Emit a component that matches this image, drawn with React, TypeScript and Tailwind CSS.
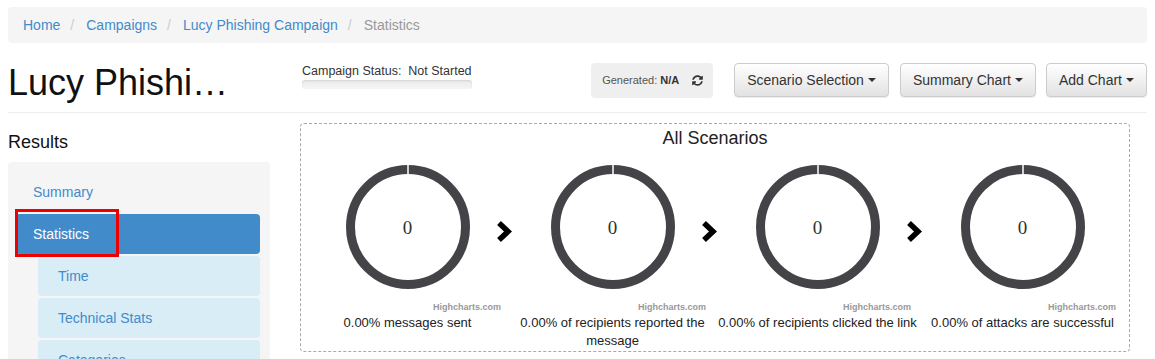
import React from "react";
import { FaSyncAlt } from "react-icons/fa";

function Caret() {
  return (
    <span className="ml-[4px] inline-block h-0 w-0 border-x-[4px] border-t-[4px] border-x-transparent border-t-[#333] align-middle" />
  );
}

function Btn({ label, className = "" }: { label: string; className?: string }) {
  return (
    <button
      className={
        "flex h-[34px] items-center rounded-[4px] border border-[#ccc] bg-linear-to-b from-white to-[#e2e2e2] px-[12px] text-[14px] text-[#333] shadow-[0_1px_1px_rgba(0,0,0,0.075)] " +
        className
      }
    >
      {label}
      <Caret />
    </button>
  );
}

function Donut() {
  return (
    <div className="relative h-[124px] w-[124px]">
      <svg width="124" height="124" viewBox="0 0 124 124">
        <circle cx="62" cy="62" r="57.5" fill="none" stroke="#434348" strokeWidth="9" />
        <line x1="62" y1="0" x2="62" y2="11" stroke="#fff" strokeWidth="1.5" />
      </svg>
      <div className="absolute inset-0 flex items-center justify-center pt-[3px] font-['Liberation_Serif',serif] text-[19px] text-[#333]">
        0
      </div>
    </div>
  );
}

function Arrow() {
  return (
    <svg
      className="absolute left-[191px] top-[70px]"
      width="18"
      height="26"
      viewBox="0 0 18 26"
    >
      <polyline points="3,4 12,12.5 3,21" fill="none" stroke="#000" strokeWidth="5.5" strokeLinejoin="miter" />
    </svg>
  );
}

function ChartCol({ label, arrow }: { label: string; arrow?: boolean }) {
  return (
    <div className="flex w-[205px] flex-col items-center">
      <div className="relative flex h-[165px] w-full justify-center pt-[16px]">
        <Donut />
        {arrow && <Arrow />}
        <div className="absolute bottom-[1px] right-[9px] text-[9px] font-bold leading-[12px] text-[#999]">
          Highcharts.com
        </div>
      </div>
      <div className="w-full text-center text-[13px] leading-[18px] text-[#222]">{label}</div>
    </div>
  );
}

export default function App() {
  const crumbs = ["Home", "Campaigns", "Lucy Phishing Campaign"];
  return (
    <div className="min-h-[359px] bg-white px-[8px] pt-[7px] font-['Liberation_Sans',Arial,sans-serif] text-[#333]">
      {/* breadcrumb */}
      <div className="flex h-[36px] items-center rounded-[4px] bg-[#f5f5f5] px-[15px] text-[14px]">
        {crumbs.map((c) => (
          <React.Fragment key={c}>
            <span className="text-[#428bca]">{c}</span>
            <span className="ml-[10px] mr-[12px] text-[#ccc]">/</span>
          </React.Fragment>
        ))}
        <span className="text-[#999]">Statistics</span>
      </div>

      {/* header row */}
      <div className="mt-[20px] flex items-start border-b border-[#eee] pb-[9px]">
        <div className="w-[294px] shrink-0">
          <h1 className="text-[36px] leading-[40px] text-[#111]">Lucy Phishi…</h1>
        </div>
        <div className="w-[172px] shrink-0">
          <div className="whitespace-nowrap text-[12.5px] leading-[16px] text-[#333]">Campaign Status:{"\u00a0 "}Not Started</div>
          <div className="mt-[1px] h-[9px] w-[170px] rounded-[3px] bg-linear-to-b from-[#ebebeb] to-[#f5f5f5] shadow-[inset_0_1px_2px_rgba(0,0,0,0.1)]" />
        </div>
        <div className="ml-auto flex items-start">
          <div className="flex h-[35px] w-[122px] items-center rounded-[4px] bg-[#efefef] pl-[11px] text-[11px] text-[#555]">
            Generated:&nbsp;<span className="font-bold text-[#333]">N/A</span>
            <FaSyncAlt className="ml-[13px] text-[#333]" size={11} />
          </div>
          <div className="ml-[21px] flex">
            <Btn label="Scenario Selection" />
            <Btn label="Summary Chart" className="ml-[11px]" />
            <Btn label="Add Chart" className="ml-[10px]" />
          </div>
        </div>
      </div>

      {/* main */}
      <div className="flex items-start gap-[30px]">
        <div className="w-[262px] shrink-0 pt-[19px]">
          <div className="text-[18px] leading-[20px] text-[#111]">Results</div>
          <div className="mt-[10px] rounded-[4px] bg-[#f5f5f5] pb-[10px] pl-[8px] pr-[10px] pt-[10px] text-[14px]">
            <div className="flex h-[40px] items-center rounded-[4px] pl-[17px] text-[#428bca]">Summary</div>
            <div className="relative mt-[2px] flex h-[40px] items-center rounded-[4px] bg-[#428bca] pl-[17px] text-white">
              Statistics
              <div className="absolute left-[-1px] top-[-5px] h-[48px] w-[104px] border-[3px] border-[#e00]" />
            </div>
            <div className="ml-[22px]">
              {["Time", "Technical Stats", "Categories", "Recipients"].map((s) => (
                <div
                  key={s}
                  className="mt-[2px] flex h-[40px] items-center rounded-[4px] bg-[#d9edf7] pl-[20px] text-[#428bca]"
                >
                  {s}
                </div>
              ))}
            </div>
          </div>
        </div>

        <div className="mt-[10px] w-[830px] shrink-0 rounded-[4px] border border-dashed border-[#aaa] px-[4px] pb-[1px] pt-[3px]">
          <div className="text-center text-[18px] leading-[22px] text-[#222]">All Scenarios</div>
          <div className="flex">
            <ChartCol label="0.00% messages sent" arrow />
            <ChartCol label="0.00% of recipients reported the message" arrow />
            <ChartCol label="0.00% of recipients clicked the link" arrow />
            <ChartCol label="0.00% of attacks are successful" />
          </div>
        </div>
      </div>
    </div>
  );
}
